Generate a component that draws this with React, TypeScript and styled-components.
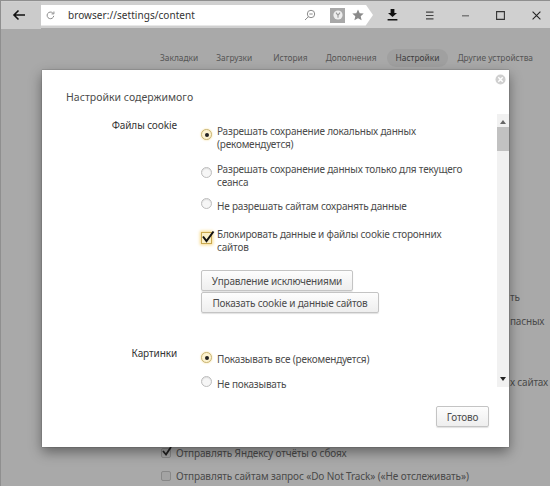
import React from 'react';
import styled, { createGlobalStyle } from 'styled-components';

const GlobalStyle = createGlobalStyle`
  html, body {
    margin: 0;
    padding: 0;
    background: #a9a9a9;
    font-family: "Noto Sans", "Open Sans", sans-serif;
  }
`;

const Page = styled.div`
  position: relative;
  width: 550px;
  height: 486px;
  overflow: hidden;
  background: #a9a9a9;
  border-left: 1px solid #8f8f8f;
  box-sizing: border-box;
`;

const Toolbar = styled.div`
  display: flex;
  align-items: center;
  height: 28px;
  box-sizing: border-box;
  padding-top: 1px;
  background: #d0d0d0;
  border-top: 1px solid #8f8f8f;
`;

const BackButton = styled.div`
  display: flex;
  align-items: center;
  justify-content: center;
  width: 40px;
  height: 27px;
  padding-right: 5px;
  box-sizing: border-box;
  background: #cbcbcb;
`;

const AddressBar = styled.div`
  display: flex;
  align-items: center;
  width: 332px;
  height: 21px;
  box-sizing: border-box;
  padding: 0 9px 0 5px;
  background: #fff;
  clip-path: polygon(0 0, 97.8% 0, 100% 50%, 97.8% 100%, 0 100%);
`;

const Url = styled.span`
  flex: 1;
  margin-left: 13px;
  font-size: 10px;
  letter-spacing: 0.05px;
  color: #333;
`;

const YandexTile = styled.div`
  display: flex;
  align-items: center;
  justify-content: center;
  width: 15px;
  height: 15px;
  margin: 0 7px 0 14px;
  background: #a8a8a8;
`;

const WindowButtons = styled.div`
  display: flex;
  flex: 1;
  align-items: center;
  justify-content: space-between;
  padding: 0 9px 0 14px;
`;

const Nav = styled.nav`
  display: flex;
  align-items: center;
  height: 18px;
  margin: 21px 0 0 159px;
`;

const NavItem = styled.span<{ $active?: boolean; $gap: number }>`
  margin-right: ${p => p.$gap}px;
  padding: 0 ${p => (p.$active ? 9 : 0)}px;
  height: 18px;
  line-height: 18px;
  border-radius: 9px;
  font-size: 8.4px;
  white-space: nowrap;
  color: ${p => (p.$active ? '#3c3c3c' : '#555')};
  background: ${p => (p.$active ? '#a0a0a0' : 'transparent')};
`;

const BehindList = styled.div`
  display: flex;
  flex-direction: column;
  margin-top: 223px;
`;

const BehindFragment = styled.div<{ $top: number; $left: number }>`
  margin: ${p => p.$top}px 0 0 ${p => p.$left}px;
  height: 14px;
  line-height: 14px;
  font-size: 10px;
  letter-spacing: -0.2px;
  color: #4a4a4a;
  white-space: nowrap;
`;

const BehindCheckRow = styled.div<{ $top: number }>`
  display: flex;
  align-items: center;
  gap: 5px;
  height: 14px;
  margin: ${p => p.$top}px 0 0 160px;
  font-size: 10px;
  letter-spacing: -0.12px;
  color: #4a4a4a;
  white-space: nowrap;
`;

const BehindBox = styled.span`
  position: relative;
  display: block;
  width: 10px;
  height: 10px;
  border: 1px solid #888;
  border-radius: 2px;
  background: #a3a3a3;
  box-sizing: border-box;
`;

const Modal = styled.div`
  position: absolute;
  left: 41px;
  top: 70px;
  display: flex;
  flex-direction: column;
  width: 467px;
  height: 377px;
  background: #fff;
  box-shadow: 0 5px 12px rgba(0, 0, 0, 0.42), 0 0 1px rgba(0, 0, 0, 0.5);
`;

const CloseButton = styled.div`
  position: absolute;
  top: 4px;
  right: 3px;
  display: flex;
`;

const Title = styled.div`
  height: 44px;
  padding: 20px 0 0 24px;
  box-sizing: border-box;
  font-size: 10.5px;
  line-height: 14px;
  letter-spacing: 0.02px;
  color: #4c4c4c;
`;

const Body = styled.div`
  display: flex;
  height: 273px;
`;

const ScrollContent = styled.div`
  flex: 1;
  padding-top: 5px;
`;

const Section = styled.section<{ $top?: number }>`
  display: grid;
  grid-template-columns: 135px 1fr;
  column-gap: 24px;
  margin-top: ${p => p.$top || 0}px;
`;

const SectionLabel = styled.div`
  text-align: right;
  font-size: 10px;
  letter-spacing: -0.1px;
  line-height: 13px;
  color: #333;
`;

const Options = styled.div`
  display: flex;
  flex-direction: column;
  padding-top: 6px;
`;

const Option = styled.div<{ $top?: number }>`
  display: flex;
  align-items: flex-start;
  gap: 5px;
  width: 262px;
  margin-top: ${p => p.$top || 0}px;
  font-size: 10px;
  letter-spacing: -0.2px;
  line-height: 13px;
  color: #4c4c4c;
`;

const Radio = styled.span<{ $checked?: boolean; $offset: number }>`
  display: flex;
  flex: none;
  align-items: center;
  justify-content: center;
  width: 11px;
  height: 11px;
  margin-top: ${p => p.$offset}px;
  box-sizing: border-box;
  border: 1px solid ${p => (p.$checked ? '#c9b678' : '#bdbdbd')};
  border-radius: 50%;
  background: ${p => (p.$checked ? '#fdf3d0' : '#f6f6f6')};
  box-shadow: ${p => (p.$checked ? '0 0 2px #f2d88c' : 'inset 0 1px 1px #ddd')};

  &::after {
    content: '';
    display: ${p => (p.$checked ? 'block' : 'none')};
    width: 4px;
    height: 4px;
    border-radius: 50%;
    background: #222;
  }
`;

const CheckBox = styled.span`
  position: relative;
  flex: none;
  width: 11px;
  height: 12px;
  margin-top: 4px;
  box-sizing: border-box;
  border: 1px solid #c9a84e;
  background: #fbf0c8;
  box-shadow: 0 0 3px 1px #f6d98a;
`;

const CheckMark = styled.svg`
  position: absolute;
  left: -1px;
  top: -3px;
`;

const ButtonStack = styled.div`
  display: flex;
  flex-direction: column;
  align-items: flex-start;
  gap: 1px;
  margin-top: 16px;
`;

const PushButton = styled.button<{ $width: number }>`
  width: ${p => p.$width}px;
  height: 21px;
  padding: 0;
  border: 1px solid #c4c4c4;
  border-radius: 2px;
  background: linear-gradient(#fdfdfd, #eeeeee);
  box-shadow: 0 1px 1px rgba(0, 0, 0, 0.12);
  font-family: inherit;
  font-size: 10px;
  letter-spacing: -0.2px;
  color: #4c4c4c;
`;

const ScrollBar = styled.div`
  position: relative;
  display: flex;
  flex-direction: column;
  align-items: center;
  width: 12px;
  background: #f1f1f1;
`;

const ArrowUp = styled.div`
  width: 0;
  height: 0;
  margin-top: 6px;
  border: 3px solid transparent;
  border-top: 0;
  border-bottom: 4px solid #666;
`;

const ScrollThumb = styled.div`
  width: 100%;
  height: 24px;
  margin-top: 3px;
  background: #c1c1c1;
`;

const ArrowDown = styled.div`
  width: 0;
  height: 0;
  margin-top: auto;
  margin-bottom: 6px;
  border: 3px solid transparent;
  border-bottom: 0;
  border-top: 4px solid #222;
`;

const Footer = styled.div`
  display: flex;
  justify-content: flex-end;
  padding: 19px 20px 0 0;
`;

const App = () => {
  return (
    <>
      <GlobalStyle />
      <Page>
        <Toolbar>
          <BackButton>
            <svg width="14" height="12" viewBox="0 0 14 12" fill="none" stroke="#111" strokeWidth="1.6">
              <path d="M13 6H2M6.500 1.500 2 6l4.500 4.500" />
            </svg>
          </BackButton>
          <AddressBar>
            <svg width="9" height="9" viewBox="0 0 10 10" fill="none" stroke="#8a8a8a" strokeWidth="1.1">
              <path d="M8.600 5.400A3.700 3.700 0 1 1 7.600 2.300" />
              <path d="M8.800 .6v2.600H6.200" />
            </svg>
            <Url>browser://settings/content</Url>
            <svg width="12" height="12" viewBox="0 0 12 12" fill="none" stroke="#8c8c8c" strokeWidth="1">
              <circle cx="7" cy="5" r="3.700" />
              <path d="M4.400 7.700 1 11M5.300 5h3.400" />
            </svg>
            <YandexTile>
              <svg width="10" height="10" viewBox="0 0 10 10">
                <circle cx="5" cy="5" r="4.600" fill="#eee" />
                <path d="M3 2.600 5 5.400l2-2.800M5 5.400v2.400" fill="none" stroke="#999" strokeWidth="1.1" />
              </svg>
            </YandexTile>
            <svg width="12" height="12" viewBox="0 0 12 12" fill="#8a8a8a">
              <path d="M6 .5 7.700 4.200l4 .4-3 2.700.9 4L6 9.200l-3.600 2.100.9-4-3-2.700 4-.4z" />
            </svg>
          </AddressBar>
          <WindowButtons>
            <svg width="11" height="12" viewBox="0 0 11 12" fill="#111">
              <path d="M3.600 0h3.800v4H10L5.500 8 1 4h2.600zM.6 10h9.800v1.500H.6z" />
            </svg>
            <svg width="9" height="9" viewBox="0 0 9 9" stroke="#444" strokeWidth="1.2">
              <path d="M1 1.100h7.500M1 4.500h7.500M1 7.900h7.500" />
            </svg>
            <svg width="9" height="9" viewBox="0 0 9 9" stroke="#666" strokeWidth="1.2">
              <path d="M1 4.800h7" />
            </svg>
            <svg width="9" height="9" viewBox="0 0 9 9" fill="none" stroke="#333" strokeWidth="1.1">
              <path d="M.6.600h7.800v7.800H.6z" />
            </svg>
            <svg width="9" height="9" viewBox="0 0 9 9" stroke="#222" strokeWidth="1.1">
              <path d="m.6.600 7.800 7.800M8.400.600.6 8.400" />
            </svg>
          </WindowButtons>
        </Toolbar>

        <Nav>
          <NavItem $gap={18}>Закладки</NavItem>
          <NavItem $gap={21}>Загрузки</NavItem>
          <NavItem $gap={18}>История</NavItem>
          <NavItem $gap={10}>Дополнения</NavItem>
          <NavItem $active $gap={9}>Настройки</NavItem>
          <NavItem $gap={0}>Другие устройства</NavItem>
        </Nav>

        <BehindList>
          <BehindFragment $top={0} $left={509}>ть</BehindFragment>
          <BehindFragment $top={10} $left={509}>пасных</BehindFragment>
          <BehindFragment $top={47} $left={509}>х сайтах</BehindFragment>
          <BehindCheckRow $top={57}>
            <BehindBox>
              <CheckMark width="12" height="12" viewBox="0 0 12 12" fill="none" stroke="#222" strokeWidth="1.800">
                <path d="M2 5l3 3.500L10 1" />
              </CheckMark>
            </BehindBox>
            Отправлять Яндексу отчёты о сбоях
          </BehindCheckRow>
          <BehindCheckRow $top={9}>
            <BehindBox />
            Отправлять сайтам запрос «Do Not Track» («Не отслеживать»)
          </BehindCheckRow>
        </BehindList>

        <Modal>
          <CloseButton>
            <svg width="11" height="11" viewBox="0 0 11 11">
              <circle cx="5.500" cy="5.500" r="5" fill="#cfcfcf" />
              <path d="m3.300 3.300 4.400 4.400m0-4.400-4.400 4.400" stroke="#fff" strokeWidth="1.400" />
            </svg>
          </CloseButton>
          <Title>Настройки содержимого</Title>
          <Body>
            <ScrollContent>
              <Section>
                <SectionLabel>Файлы cookie</SectionLabel>
                <Options>
                  <Option>
                    <Radio $checked $offset={4} />
                    <span>Разрешать сохранение локальных данных (рекомендуется)</span>
                  </Option>
                  <Option $top={12}>
                    <Radio $offset={4} />
                    <span>Разрешать сохранение данных только для текущего сеанса</span>
                  </Option>
                  <Option $top={11}>
                    <Radio $offset={-2} />
                    <span>Не разрешать сайтам сохранять данные</span>
                  </Option>
                  <Option $top={15}>
                    <CheckBox>
                      <CheckMark width="14" height="14" viewBox="0 0 14 14" fill="none" stroke="#111" strokeWidth="2">
                        <path d="M2 6.500l3.500 4.500L12.500 1.500" />
                      </CheckMark>
                    </CheckBox>
                    <span>Блокировать данные и файлы cookie сторонних сайтов</span>
                  </Option>
                  <ButtonStack>
                    <PushButton $width={152}>Управление исключениями</PushButton>
                    <PushButton $width={178}>Показать cookie и данные сайтов</PushButton>
                  </ButtonStack>
                </Options>
              </Section>
              <Section $top={34}>
                <SectionLabel>Картинки</SectionLabel>
                <Options>
                  <Option>
                    <Radio $checked $offset={-1} />
                    <span>Показывать все (рекомендуется)</span>
                  </Option>
                  <Option $top={12}>
                    <Radio $offset={-2} />
                    <span>Не показывать</span>
                  </Option>
                </Options>
              </Section>
            </ScrollContent>
            <ScrollBar>
              <ArrowUp />
              <ScrollThumb />
              <ArrowDown />
            </ScrollBar>
          </Body>
          <Footer>
            <PushButton $width={53}>Готово</PushButton>
          </Footer>
        </Modal>
      </Page>
    </>
  );
};

export default App;
